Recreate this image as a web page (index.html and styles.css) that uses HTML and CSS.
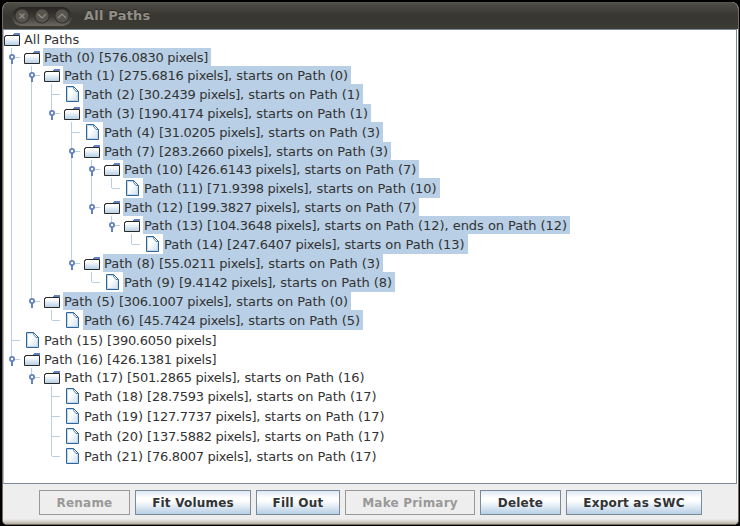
FILE: index.html
```html
<!DOCTYPE html>
<html lang="en">
<head>
<meta charset="utf-8">
<title>All Paths</title>
<link rel="stylesheet" href="styles.css">
</head>
<body>
<svg class="defs" width="0" height="0">
  <defs>
    <linearGradient id="folder-fill" x1="0" y1="0" x2="0" y2="1"><stop offset=".2" stop-color="#fff"/><stop offset=".45" stop-color="#e6eff7"/><stop offset="1" stop-color="#b3cde4"/></linearGradient>
    <linearGradient id="leaf-fill" x1="0" y1="0" x2="1" y2="1"><stop offset=".4" stop-color="#fff"/><stop offset="1" stop-color="#c8dcec"/></linearGradient>
    <symbol id="folder" viewBox="0 0 16 18">
      <path d="M.5 15.5V6.500H1.500V5.500H15.500V15.500Z" fill="url(#folder-fill)" stroke="#292929"/>
      <path d="M9 5V4H10V3H16V5Z" fill="#6382bf"/>
    </symbol>
    <symbol id="leaf" viewBox="0 0 16 20">
      <path d="M2.500 2.500H9.500L14.500 7.500V17.500H2.500Z" fill="url(#leaf-fill)" stroke="#2f649b"/>
      <path d="M3.500 16.500V3.500H9M13.500 9V16.500H3.500" stroke="#c2d9ea" fill="none"/>
      <path d="M9.500 2.500V4.500L12 7.500H14.500" stroke="#2f649b" stroke-width=".8" fill="none"/>
    </symbol>
    <symbol id="handle" viewBox="0 0 6 10">
      <path d="M2 5H4V10H2Z" fill="#6382bf"/>
      <circle cx="3" cy="3" r="2.100" fill="#fff" stroke="#6382bf" stroke-width="1.800"/>
    </symbol>
  </defs>
</svg>
<main class="window">
  <header class="titlebar">
    <div class="controls">
      <svg viewBox="0 0 18 18"><path d="M6.500 6.500L11.500 11.500M11.500 6.500L6.500 11.500"/></svg>
      <svg viewBox="0 0 18 18"><path d="M5 7L9 11L13 7"/></svg>
      <svg viewBox="0 0 18 18"><path d="M5 11L9 7L13 11"/></svg>
    </div>
    <h1>All Paths</h1>
  </header>
  <section class="tree" id="tree"></section>
  <footer class="actions">
    <button class="rename" disabled>Rename</button>
    <button class="fit">Fit Volumes</button>
    <button class="fill">Fill Out</button>
    <button class="primary" disabled>Make Primary</button>
    <button class="delete">Delete</button>
    <button class="export">Export as SWC</button>
  </footer>
</main>
<script src="tree.js"></script>
</body>
</html>
```
FILE: styles.css
```css
* { box-sizing: border-box; }
body { margin: 0; width: 740px; height: 526px; padding: 2px 1px 1px 2px; background: #000; overflow: hidden; font: 13px "DejaVu Sans", sans-serif; color: #333; }
.defs { position: absolute; }
.window { width: 737px; height: 523px; display: flex; flex-direction: column; background: #eee; border: 1px solid #756b5d; border-top: 0; border-radius: 7px 7px 5px 5px; overflow: hidden; }
.titlebar { height: 27px; flex: none; display: flex; align-items: center; padding: 1px 0 0 9px; background: linear-gradient(#5a584e 0, #4b4a43 2px, #373631 14px, #3d3b36 100%); }
.controls { width: 60px; height: 19px; display: flex; align-items: center; padding: 0 1px; border-radius: 10px; background: linear-gradient(#262522, #3b3934 50%, #6b6962); gap: 2px; }
.controls svg { width: 18px; height: 18px; flex: none; fill: none; stroke: #8f8d84; stroke-width: 1.2; background: radial-gradient(circle, #56544d 0 6px, #2f2e2a 7px, transparent 8px); }
h1 { margin: 0 0 0 12px; font-size: 13px; line-height: 18px; letter-spacing: .2px; color: #918e86; text-shadow: 0 -1px #292824; }
.tree { height: 455px; flex: none; margin-right: 1px; background: #fff; border: 1px solid #7a8a99; border-left-color: #b4bec8; box-shadow: 1px 1px #fff; }
.tree ul { list-style: none; margin: 0; padding: 0; }
.tree li { position: relative; }
.tree ul ul { padding-left: 20px; }
.row { display: flex; height: 18px; align-items: stretch; white-space: pre; }
.row.leaf { height: 20px; }
.row svg { width: 16px; height: 100%; flex: none; }
.label { margin-left: 3px; padding: 0 3px 0 1px; line-height: 20px; letter-spacing: -.04px; }
.length { letter-spacing: -.28px; }
.leaf .label { line-height: 22px; }
.selected { background: #b8cfe5; }
li li::before { content: ""; position: absolute; left: -13px; top: 0; bottom: 0; width: 1px; background: #b8cfe5; }
.tree li li::before { left: 7px; }
.tree li li { margin-left: -20px; padding-left: 20px; }
li li:last-child::before { bottom: auto; height: 10px; }
.row::before { content: ""; position: absolute; left: 8px; top: 9px; width: 8px; height: 1px; background: #b8cfe5; }
.row.leaf::before { top: 10px; }
.tree > ul > li > .row::before { display: none; }
.row .handle { position: absolute; left: 5px; top: 6px; width: 6px; height: 10px; }
.actions { flex: 1; display: flex; gap: 5px; padding: 6px 0 0 36px; background: linear-gradient(#eee 35px, #dbd7d0 37px, #b5afa4); }
button { height: 25px; padding: 0; border: 1px solid #7a8a99; border-radius: 0; background: linear-gradient(#dde8f3 0, #fff 30%, #fff 42%, #b8cfe5); font: bold 12px "DejaVu Sans", sans-serif; letter-spacing: .2px; color: #333; white-space: nowrap; }
button:disabled { background: #eee; border-color: #999; color: #999; }
.rename { width: 91px; } .fit { width: 116px; } .fill { width: 84px; }
.primary { width: 130px; } .delete { width: 81px; } .export { width: 136px; }
```
FILE: tree.js
```js
// Each entry: depth, kind (f = folder, l = leaf), selected, text
const rows = [
  [0, "f", 0, "All Paths"],
  [1, "f", 1, "Path (0) [576.0830 pixels]"],
  [2, "f", 1, "Path (1) [275.6816 pixels], starts on Path (0)"],
  [3, "l", 1, "Path (2) [30.2439 pixels], starts on Path (1)"],
  [3, "f", 1, "Path (3) [190.4174 pixels], starts on Path (1)"],
  [4, "l", 1, "Path (4) [31.0205 pixels], starts on Path (3)"],
  [4, "f", 1, "Path (7) [283.2660 pixels], starts on Path (3)"],
  [5, "f", 1, "Path (10) [426.6143 pixels], starts on Path (7)"],
  [6, "l", 1, "Path (11) [71.9398 pixels], starts on Path (10)"],
  [5, "f", 1, "Path (12) [199.3827 pixels], starts on Path (7)"],
  [6, "f", 1, "Path (13) [104.3648 pixels], starts on Path (12), ends on Path (12)"],
  [7, "l", 1, "Path (14) [247.6407 pixels], starts on Path (13)"],
  [4, "f", 1, "Path (8) [55.0211 pixels], starts on Path (3)"],
  [5, "l", 1, "Path (9) [9.4142 pixels], starts on Path (8)"],
  [2, "f", 1, "Path (5) [306.1007 pixels], starts on Path (0)"],
  [3, "l", 1, "Path (6) [45.7424 pixels], starts on Path (5)"],
  [1, "l", 0, "Path (15) [390.6050 pixels]"],
  [1, "f", 0, "Path (16) [426.1381 pixels]"],
  [2, "f", 0, "Path (17) [501.2865 pixels], starts on Path (16)"],
  [3, "l", 0, "Path (18) [28.7593 pixels], starts on Path (17)"],
  [3, "l", 0, "Path (19) [127.7737 pixels], starts on Path (17)"],
  [3, "l", 0, "Path (20) [137.5882 pixels], starts on Path (17)"],
  [3, "l", 0, "Path (21) [76.8007 pixels], starts on Path (17)"]
];
const parents = [document.getElementById("tree")];
for (const [depth, kind, selected, text] of rows) {
  const parent = parents[depth];
  let list = parent.querySelector(":scope > ul");
  if (!list) { list = document.createElement("ul"); parent.append(list); }
  const item = document.createElement("li");
  const folder = kind === "f";
  const label = text.replace(/\[.*?\]/, '<span class="length">$&</span>');
  item.innerHTML = `<div class="row ${folder ? "folder" : "leaf"}">` +
    (folder && depth ? '<svg class="handle"><use href="#handle"/></svg>' : "") +
    `<svg><use href="#${folder ? "folder" : "leaf"}"/></svg>` +
    `<span class="label${selected ? " selected" : ""}">${label}</span></div>`;
  list.append(item);
  parents[depth + 1] = item;
}
```
